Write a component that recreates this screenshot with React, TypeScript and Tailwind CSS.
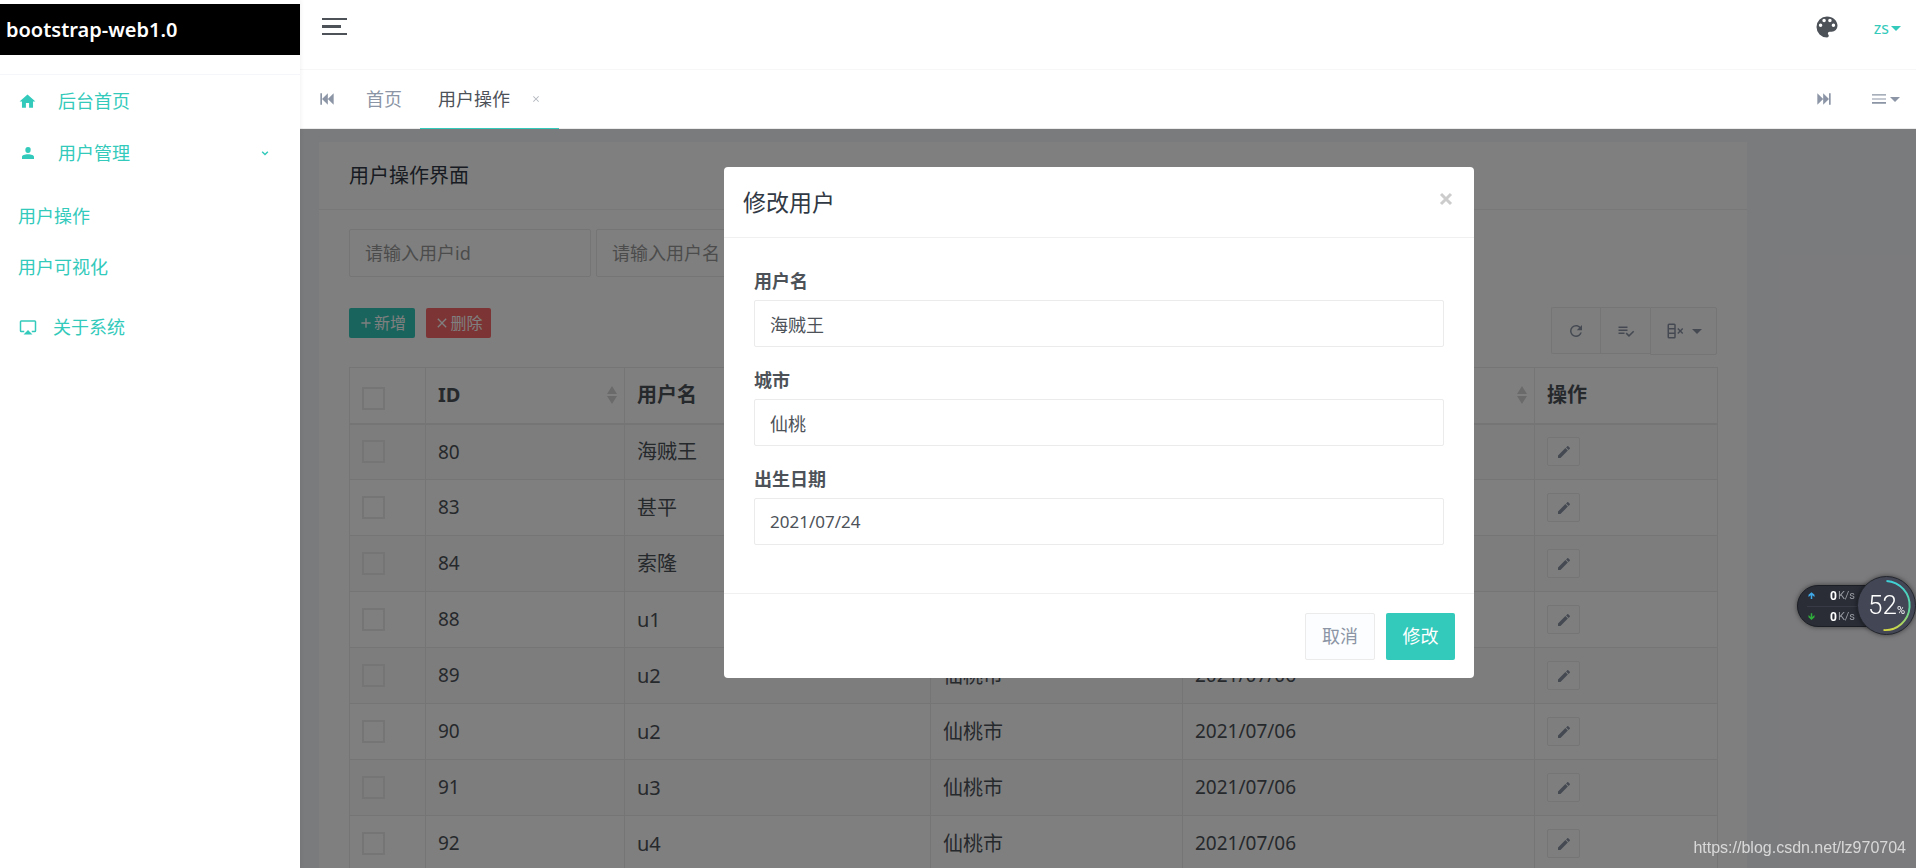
import React, { useState } from "react";
import clsx from "clsx";

interface User {
    id: number;
    name: string;
    city: string;
    birthday: string;
}

interface IconProps {
    d: string;
    className?: string;
}

interface FieldProps {
    id: string;
    label: string;
    value: string;
    date?: boolean;
    onChange: (value: string) => void;
}

const users: User[] = [
    { id: 80, name: "海贼王", city: "仙桃", birthday: "2021/07/24" },
    { id: 83, name: "甚平", city: "仙桃市", birthday: "2021/07/06" },
    { id: 84, name: "索隆", city: "仙桃市", birthday: "2021/07/06" },
    { id: 88, name: "u1", city: "仙桃市", birthday: "2021/07/06" },
    { id: 89, name: "u2", city: "仙桃市", birthday: "2021/07/06" },
    { id: 90, name: "u2", city: "仙桃市", birthday: "2021/07/06" },
    { id: 91, name: "u3", city: "仙桃市", birthday: "2021/07/06" },
    { id: 92, name: "u4", city: "仙桃市", birthday: "2021/07/06" },
];

const icons = {
    home: "M10 20V14H14V20H19V12H22L12 3L2 12H5V20H10Z",
    account: "M12 3a4 4 0 0 1 4 4.500 4 4.500 0 0 1-4 4.500 4 4.500 0 0 1-4-4.500A4 4.500 0 0 1 12 3m0 11c5 0 9 1.500 9 4v3H3v-3c0-2.500 4-4 9-4z",
    airplay: "M6 22H18L12 16M21 3H3A2 2 0 0 0 1 5V17A2 2 0 0 0 3 19H7V17H3V5H21V17H17V19H21A2 2 0 0 0 23 17V5A2 2 0 0 0 21 3Z",
    chevron: "M6.400 7.600L12 13.200L17.600 7.600L20 10L12 18L4 10L6.400 7.600Z",
    palette: "M17.5 12A1.5 1.5 0 0 1 16 10.5 1.5 1.5 0 0 1 17.5 9 1.5 1.5 0 0 1 19 10.5 1.5 1.5 0 0 1 17.5 12M14.5 8A1.5 1.5 0 0 1 13 6.5 1.5 1.5 0 0 1 14.5 5 1.5 1.5 0 0 1 16 6.5 1.5 1.5 0 0 1 14.5 8M9.5 8A1.5 1.5 0 0 1 8 6.5 1.5 1.5 0 0 1 9.5 5 1.5 1.5 0 0 1 11 6.5 1.5 1.5 0 0 1 9.5 8M6.5 12A1.5 1.5 0 0 1 5 10.5 1.5 1.5 0 0 1 6.5 9 1.5 1.5 0 0 1 8 10.5 1.5 1.5 0 0 1 6.5 12M12 3A9 9 0 0 0 3 12A9 9 0 0 0 12 21A1.5 1.5 0 0 0 13.5 19.5C13.5 19.11 13.35 18.76 13.11 18.5C12.88 18.23 12.73 17.88 12.73 17.5A1.5 1.5 0 0 1 14.23 16H16A5 5 0 0 0 21 11C21 6.58 16.97 3 12 3Z",
    first: "M4 5V19H6V5H4M13 5L6 12L13 19V5M20 5L13 12L20 19V5Z",
    last: "M20 5V19H18V5H20M11 5L18 12L11 19V5M4 5L11 12L4 19V5Z",
    menu: "M0 4H24V6H0V4M0 11H24V13H0V11M0 17H24V20H0V17Z",
    refresh: "M17.65 6.35C16.2 4.9 14.21 4 12 4A8 8 0 0 0 4 12A8 8 0 0 0 12 20C15.73 20 18.84 17.45 19.73 14H17.65C16.83 16.33 14.61 18 12 18A6 6 0 0 1 6 12A6 6 0 0 1 12 6C13.66 6 15.14 6.69 16.22 7.78L13 11H20V4L17.65 6.35Z",
    playlist: "M14 10H2V12H14V10M14 6H2V8H14V6M2 16H10V14H2V16M21.5 11.5L23 13L16 20L11.5 15.5L13 14L16 17L21.5 11.5Z",
    columns: "M4 2H11A2 2 0 0 1 13 4V20A2 2 0 0 1 11 22H4A2 2 0 0 1 2 20V4A2 2 0 0 1 4 2M4 10V14H11V10H4M4 16V20H11V16H4M4 4V8H11V4H4M17.6 12L15 9.4L16.4 8L19 10.6L21.6 8L23 9.4L20.4 12L23 14.6L21.6 16L19 13.4L16.4 16L15 14.6L17.6 12Z",
    pencil: "M20.71 7.04C21.1 6.65 21.1 6 20.71 5.63L18.37 3.29C18 2.9 17.35 2.9 16.96 3.29L15.12 5.12L18.87 8.87M3 17.25V21H6.75L17.81 9.93L14.06 6.18L3 17.25Z",
    plus: "M19 13H13V19H11V13H5V11H11V5H13V11H19V13Z",
    close: "M19 6.41L17.59 5L12 10.59L6.41 5L5 6.41L10.59 12L5 17.59L6.41 19L12 13.41L17.59 19L19 17.59L13.41 12L19 6.41Z",
    arrowUp: "M14 21H10V11L4 16V10L12 3L20 10V16L14 11V21Z",
};

function Icon({ d, className }: IconProps) {
    return (
        <svg viewBox="0 0 24 24" fill="currentColor" aria-hidden="true" className={clsx("shrink-0", className)}>
            <path d={d} />
        </svg>
    );
}

function Caret() {
    return <span className="border-x-[5px] border-t-[5px] border-x-transparent border-t-current"></span>;
}

function SortArrows() {
    return (
        <svg viewBox="0 0 12 18" fill="#d5d5d5" aria-hidden="true" className="h-[18px] w-3">
            <path d="M6 0L11 8H1ZM6 18L1 10H11Z" />
        </svg>
    );
}

function Sidebar() {
    return (
        <aside className="z-10 w-[300px] shrink-0 bg-white text-[#33cabb] shadow-[0_0_5px_rgba(0,0,0,0.08)]">
            <div className="h-[75px] border-b border-[#f5f6fa] pt-1">
                <a href="#home" className="flex h-[51px] items-center bg-black pl-[6px] text-[20px] font-semibold text-white">
                    bootstrap-web1.0
                </a>
            </div>
            <nav className="text-[18px] leading-[27px]">
                <a href="#home" className="flex h-[52px] items-center pl-[18px]">
                    <Icon d={icons.home} className="size-[19px]" />
                    <span className="ml-[21px]">后台首页</span>
                </a>
                <a href="#users" className="flex h-[52px] items-center pr-[30px] pl-5">
                    <Icon d={icons.account} className="size-4" />
                    <span className="ml-[22px] flex-1">用户管理</span>
                    <Icon d={icons.chevron} className="size-[10px]" />
                </a>
                <div className="py-[11px]">
                    <a href="#user-list" className="flex h-[52px] items-center pl-[18px]">用户操作</a>
                    <a href="#user-chart" className="flex h-[50px] items-center pl-[18px]">用户可视化</a>
                </div>
                <a href="#about" className="flex h-[48px] items-center pl-[19px]">
                    <Icon d={icons.airplay} className="size-[18px]" />
                    <span className="ml-4">关于系统</span>
                </a>
            </nav>
        </aside>
    );
}

function Header() {
    return (
        <header className="flex h-[70px] items-start justify-between border-b border-[#f7f7f8] bg-white pr-[15px] pl-[22px]">
            <button aria-label="菜单" className="mt-[18px] flex h-[17px] flex-col justify-between">
                <span className="h-[2px] w-[25px] bg-[#4d5259]"></span>
                <span className="h-[3px] w-[19px] bg-[#4d5259]"></span>
                <span className="h-[2px] w-[25px] bg-[#4d5259]"></span>
            </button>
            <div className="mt-[13px] flex items-center gap-[33px]">
                <button aria-label="主题" className="text-[#4d5259]">
                    <Icon d={icons.palette} className="size-7" />
                </button>
                <button className="mt-[2px] flex items-center gap-[2px] text-[16px] leading-6 text-[#33cabb]">
                    zs <Caret />
                </button>
            </div>
        </header>
    );
}

function TabBar() {
    return (
        <div className="flex h-[59px] items-stretch border-b border-[#ebebeb] bg-white pr-4 text-[18px] text-[#8b95a5]">
            <button aria-label="向左" className="pr-[29px] pl-[17px]">
                <Icon d={icons.first} className="size-5" />
            </button>
            <a href="#home" className="flex items-center pr-[18px]">首页</a>
            <div className="-mb-px flex items-center border-b border-[#33cabb] px-[18px] text-[#4d5259]">
                <a href="#user-list">用户操作</a>
                <button aria-label="关闭标签" className="ml-[21px] text-[#b0b4bc]">
                    <Icon d={icons.close} className="size-[10px]" />
                </button>
            </div>
            <button aria-label="向右" className="mr-[38px] ml-auto">
                <Icon d={icons.last} className="size-5" />
            </button>
            <button aria-label="标签操作" className="flex items-center gap-1">
                <Icon d={icons.menu} className="size-[14px]" /> <Caret />
            </button>
        </div>
    );
}

function UserTable() {
    return (
        <table className="w-full table-fixed border-collapse border border-[#ebebeb] text-left text-[20px] text-[#4d5259]">
            <colgroup>
                <col className="w-[76px]" />
                <col className="w-[199px]" />
                <col className="w-[306px]" />
                <col className="w-[252px]" />
                <col className="w-[352px]" />
                <col className="w-[183px]" />
            </colgroup>
            <thead>
                <tr className="h-[56px] border-b-2 border-[#ebebeb]">
                    <th className="border-r border-[#ebebeb] pt-[6px] pl-3">
                        <input type="checkbox" aria-label="全选" className="block size-[23px] appearance-none border-2 border-[#ebebeb]" />
                    </th>
                    {["ID", "用户名", "城市", "出生日期"].map((title) => (
                        <th key={title} className="border-r border-[#ebebeb] pr-[6px] pl-3">
                            <div className="flex items-center justify-between">
                                <span>{title}</span>
                                <SortArrows />
                            </div>
                        </th>
                    ))}
                    <th className="px-3">操作</th>
                </tr>
            </thead>
            <tbody>
                {users.map((user) => (
                    <tr key={user.id} className="h-[56px] border-b border-[#ebebeb] odd:bg-[#fafafa]">
                        <td className="border-r border-[#ebebeb] pl-3">
                            <input type="checkbox" aria-label={`选择 ${user.id}`} className="block size-[23px] appearance-none border-2 border-[#ebebeb]" />
                        </td>
                        <td className="border-r border-[#ebebeb] px-3 text-[19px]">{user.id}</td>
                        <td className="border-r border-[#ebebeb] px-3">{user.name}</td>
                        <td className="border-r border-[#ebebeb] px-3">{user.city}</td>
                        <td className="border-r border-[#ebebeb] px-3 text-[19px]">{user.birthday}</td>
                        <td className="px-3">
                            <button aria-label="编辑" className="flex h-[29px] w-[33px] items-center justify-center rounded-xs border border-[#ebebeb] bg-[#fcfdfe] text-[#8b95a5]">
                                <Icon d={icons.pencil} className="size-4" />
                            </button>
                        </td>
                    </tr>
                ))}
            </tbody>
        </table>
    );
}

function UserPage() {
    return (
        <section className="mt-[13px] mr-4 ml-[19px] max-w-[1428px] bg-white">
            <h4 className="flex h-[68px] items-center border-b border-[#f0f0f0] px-[30px] text-[20px] text-[#313944]">用户操作界面</h4>
            <div className="px-[30px] pt-[19px]">
                <div className="flex gap-[5px]">
                    <input aria-label="用户id" placeholder="请输入用户id" className="h-[48px] w-[242px] rounded-xs border border-[#ebebeb] px-[15px] text-[18px] placeholder:text-[#999]" />
                    <input aria-label="用户名" placeholder="请输入用户名" className="h-[48px] w-[242px] rounded-xs border border-[#ebebeb] px-[15px] text-[18px] placeholder:text-[#999]" />
                </div>
                <div className="mt-[30px] mb-3 flex items-start justify-between">
                    <div className="mt-px flex gap-[11px] text-[16px] text-white">
                        <button className="flex h-[30px] w-[66px] items-center justify-center rounded-xs bg-[#33cabb]">
                            <Icon d={icons.plus} className="size-4" />新增
                        </button>
                        <button className="flex h-[30px] w-[65px] items-center justify-center rounded-xs bg-[#f96868]">
                            <Icon d={icons.close} className="size-4" />删除
                        </button>
                    </div>
                    <div className="flex text-[#8b95a5]">
                        <button aria-label="刷新" className="flex h-[47px] w-[49px] items-center justify-center rounded-l-xs border border-r-0 border-[#ebebeb] bg-[#fcfdfe]">
                            <Icon d={icons.refresh} className="size-[18px]" />
                        </button>
                        <button aria-label="切换视图" className="flex h-[47px] w-[50px] items-center justify-center border-y border-l border-[#ebebeb] bg-[#fcfdfe]">
                            <Icon d={icons.playlist} className="size-[18px]" />
                        </button>
                        <button aria-label="列" className="flex h-[48px] w-[67px] items-center justify-center gap-2 rounded-r-xs border border-[#ebebeb] bg-[#fcfdfe]">
                            <Icon d={icons.columns} className="size-[18px]" />
                            <Caret />
                        </button>
                    </div>
                </div>
                <UserTable />
            </div>
        </section>
    );
}

function Field({ id, label, value, date, onChange }: FieldProps) {
    return (
        <div className="mb-5">
            <label htmlFor={id} className="mb-[5px] block text-[18px] leading-[27px] font-bold">{label}</label>
            <input
                id={id}
                value={value}
                onChange={(event) => onChange(event.target.value)}
                className={clsx("block h-[47px] w-full rounded-xs border border-[#ebebeb] px-[15px] outline-none", date ? "text-[17px]" : "text-[18px]")}
            />
        </div>
    );
}

function EditModal() {
    const [name, setName] = useState("海贼王");
    const [city, setCity] = useState("仙桃");
    const [birthday, setBirthday] = useState("2021/07/24");

    return (
        <div className="absolute inset-0 bg-black/50 pt-[38px] pr-[18px]">
            <div role="dialog" aria-label="修改用户" className="mx-auto w-[750px] rounded-[4px] bg-white text-[#4d5259]">
                <div className="flex h-[71px] items-center justify-between border-b border-[#f0f0f0] px-[19px]">
                    <h4 className="text-[23px] text-[#313944]">修改用户</h4>
                    <button aria-label="关闭" className="mb-[6px] text-[#ccc]">
                        <svg viewBox="0 0 18 18" stroke="currentColor" strokeWidth="3" className="size-[18px]">
                            <path d="M4 4L14 14M14 4L4 14" />
                        </svg>
                    </button>
                </div>
                <form className="px-[30px] pt-[30px] pb-7">
                    <Field id="name" label="用户名" value={name} onChange={setName} />
                    <Field id="city" label="城市" value={city} onChange={setCity} />
                    <Field id="birthday" label="出生日期" value={birthday} date onChange={setBirthday} />
                </form>
                <div className="flex justify-end gap-[11px] border-t border-[#f0f0f0] px-[19px] pt-[19px] pb-[18px] text-[18px]">
                    <button className="h-[47px] w-[70px] rounded-xs border border-[#ebebeb] bg-[#fcfdfe] text-[#8b95a5]">取消</button>
                    <button className="h-[47px] w-[69px] rounded-xs bg-[#33cabb] text-white">修改</button>
                </div>
            </div>
        </div>
    );
}

function SpeedBall() {
    return (
        <div className="fixed top-[576px] right-0 z-20 flex items-center font-['Roboto','Noto_Sans_CJK_SC',sans-serif]">
            <div className="-mr-7 h-[42px] w-[88px] rounded-l-full border border-[#1c1e25] bg-[#2a2d36] pl-[9px] text-[12px] leading-5 text-[#9a9ca3] shadow-[0_0_5px_rgba(0,0,0,0.5)]">
                <div className="flex items-center border-b border-[#383b45]">
                    <Icon d={icons.arrowUp} className="size-[9px] text-[#3fa9e8]" />
                    <span className="mr-px ml-[14px] font-bold text-white">0</span><span className="text-[11px]">K/s</span>
                </div>
                <div className="flex items-center">
                    <Icon d={icons.arrowUp} className="size-[9px] rotate-180 text-[#2fae3c]" />
                    <span className="mr-px ml-[14px] font-bold text-white">0</span><span className="text-[11px]">K/s</span>
                </div>
            </div>
            <div className="relative flex size-[59px] items-baseline justify-center rounded-full border border-[#23252d] bg-[#434755] text-[26px] leading-[57px] font-light text-white shadow-[0_0_5px_rgba(0,0,0,0.5)]">
                52<span className="text-[11px] font-normal">%</span>
                <svg viewBox="0 0 58 58" fill="none" className="absolute inset-0 size-full">
                    <defs>
                        <linearGradient id="ring" x1="0" y1="0" x2="0" y2="1">
                            <stop offset="0" stopColor="#3fd0d8" />
                            <stop offset="0.6" stopColor="#5fd59a" />
                            <stop offset="1" stopColor="#d4d644" />
                        </linearGradient>
                    </defs>
                    <path d="M29 4A25 25 0 0 1 26 54" stroke="url(#ring)" strokeWidth="2" />
                </svg>
            </div>
        </div>
    );
}

export default function App() {
    return (
        <div className="flex h-screen overflow-hidden bg-white font-['Noto_Sans','Noto_Sans_CJK_SC',sans-serif]">
            <Sidebar />
            <div className="flex min-w-0 flex-1 flex-col">
                <Header />
                <TabBar />
                <main className="relative min-h-0 flex-1 overflow-hidden bg-[#f5f6fa]">
                    <UserPage />
                    <EditModal />
                </main>
            </div>
            <SpeedBall />
            <p className="fixed right-[10px] bottom-2 z-20 font-['Liberation_Sans',sans-serif] text-[16px] text-white/70">https://blog.csdn.net/lz970704</p>
        </div>
    );
}
